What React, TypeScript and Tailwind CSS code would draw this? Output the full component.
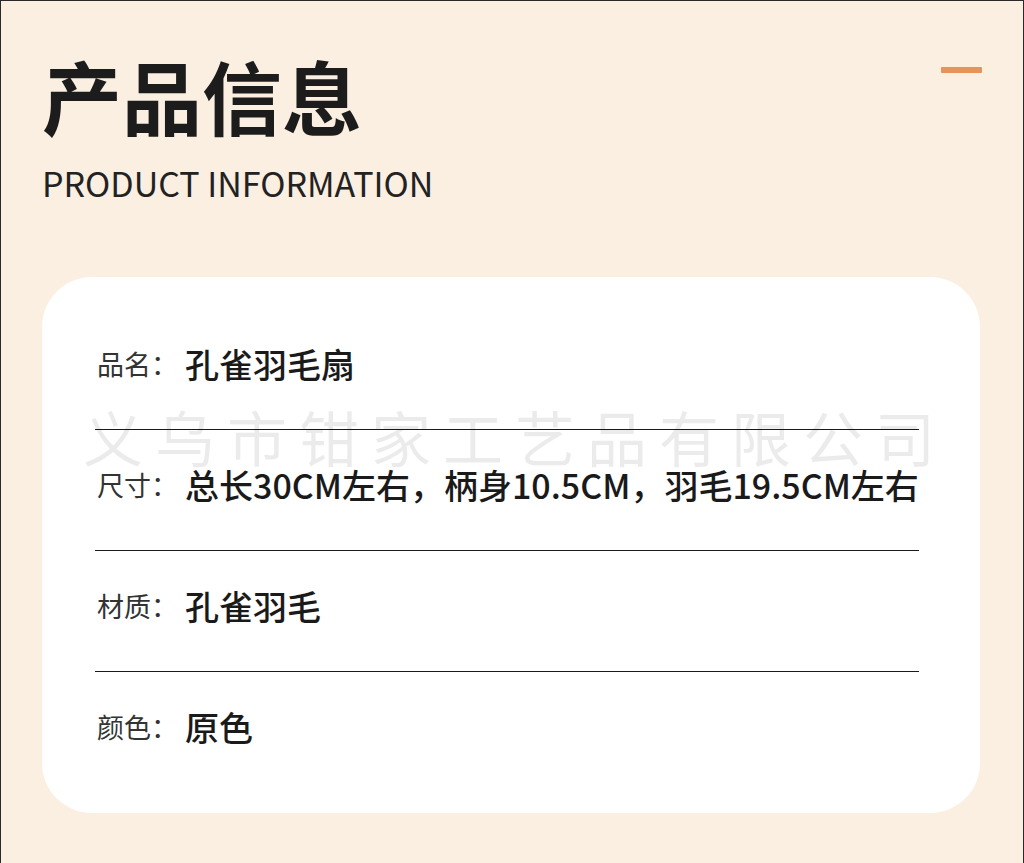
const rows = [
  { label: '品名：', value: '孔雀羽毛扇' },
  { label: '尺寸：', value: '总长30CM左右，柄身10.5CM，羽毛19.5CM左右' },
  { label: '材质：', value: '孔雀羽毛' },
  { label: '颜色：', value: '原色' },
];

export default function App() {
  return (
    <div
      className="relative w-[1024px] h-[863px] overflow-hidden bg-[#fbefe1] border-t border-l border-r border-[#2a2a2a] pt-[53px] px-[41px]"
      style={{ fontFamily: '"Noto Sans CJK SC", "Noto Sans", sans-serif' }}
    >
      {/* Header */}
      <div className="flex justify-between items-start">
        <div>
          <h1 className="text-[80px] leading-none font-bold text-[#1c1c1c]">产品信息</h1>
          <p className="mt-[32px] text-[34px] leading-none font-normal text-[#222]">PRODUCT INFORMATION</p>
        </div>
        <div className="mt-[13px] w-[41px] h-[6px] bg-[#e8935a] rounded-[1px]" />
      </div>

      {/* Card */}
      <div className="relative mt-[77px] w-[938px] rounded-[50px] bg-white pt-[67px] pb-[66px] pl-[53px] pr-[61px]">
        {rows.map((row, i) => (
          <div
            key={row.label}
            className={
              i < rows.length - 1
                ? 'flex items-center whitespace-nowrap leading-[40px] pb-[45px] mb-[35px] border-b border-[#1a1a1a]'
                : 'flex items-center whitespace-nowrap leading-[40px]'
            }
          >
            <span className="w-[90px] shrink-0 pl-[2px] text-[27px] text-[#333]">{row.label}</span>
            <span className="text-[34px] font-medium text-[#1a1a1a]">{row.value}</span>
          </div>
        ))}

        {/* watermark */}
        <div className="absolute left-[41px] top-[129px] text-[60px] leading-none font-normal tracking-[12px] text-black/[0.08] pointer-events-none">
          义乌市钳家工艺品有限公司
        </div>
      </div>
    </div>
  );
}
